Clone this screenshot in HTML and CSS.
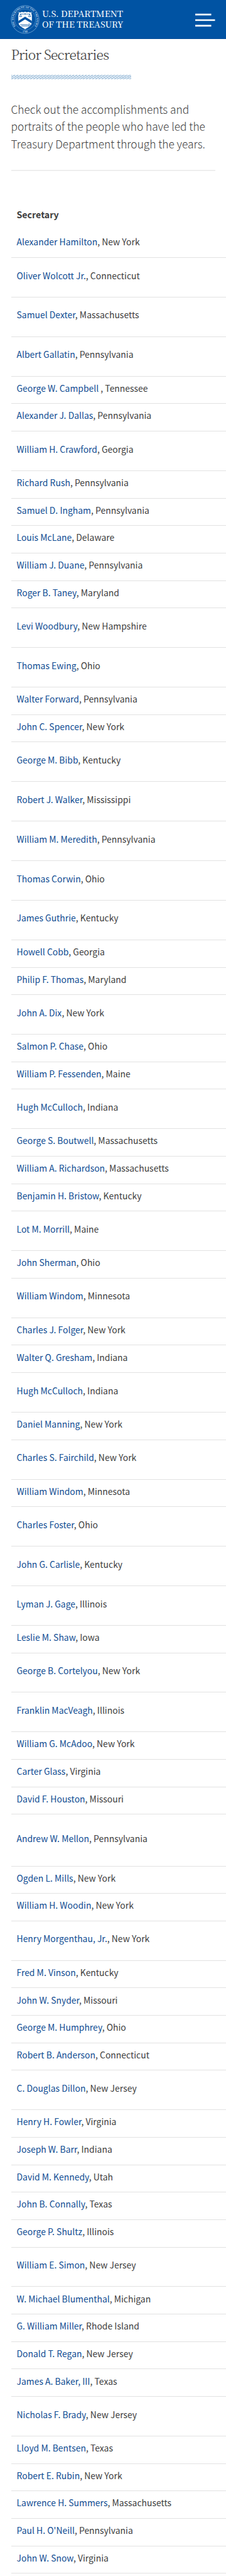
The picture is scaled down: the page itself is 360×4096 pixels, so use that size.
FILE: index.html
```
<!DOCTYPE html>
<html lang="en">
<head>
<meta charset="utf-8">
<title>Prior Secretaries</title>
<link rel="stylesheet" href="styles.css">
</head>
<body>
<header class="site-header">
  <svg class="logo" width="186" height="50" viewBox="0 0 186 50" role="img" aria-label="U.S. Department of the Treasury">
    <defs>
      <path id="ring-top" d="M8.400 34.800A18.200 18.200 0 1 1 37.600 34.800"/>
      <path id="ring-bottom" d="M7 37.300A21 21 0 0 0 39 37.300"/>
    </defs>
    <circle cx="23" cy="24" r="22.100" fill="none" stroke="#8db7df" stroke-width=".7"/>
    <circle cx="23" cy="24" r="16.600" fill="none" stroke="#6fa2d3" stroke-width=".6"/>
    <text class="ring-text"><textPath href="#ring-top" startOffset="50%" text-anchor="middle">THE DEPARTMENT OF THE TREASURY</textPath></text>
    <text class="ring-text"><textPath href="#ring-bottom" startOffset="50%" text-anchor="middle">1789</textPath></text>
    <path d="M12.5 12.2c2 .8 4 .8 5.200-.4 1.800 1 3.600.8 5.300-.3 1.700 1.100 3.500 1.300 5.300.3 1.200 1.200 3.200 1.200 5.200.4-.8 1.800-.4 3.300.3 5V28c0 6-5.300 7.800-10.800 11.500C17.500 35.800 12.200 34 12.200 28V17.200c.7-1.700 1.100-3.200.3-5z" fill="#fff"/>
    <path d="M12.200 26.200L23 19.400l10.800 6.800v4.400L23 23.800l-10.800 6.800z" fill="#0053a3"/>
    <path d="M14.800 15.300h16.400M23 13.500v3M15.800 15.500l-1.800 4h3.600zM30.200 15.500l-1.800 4h3.600z" fill="none" stroke="#0053a3" stroke-width=".7"/>
    <path d="M15.300 32.200h12M17 34.300h12" stroke="#0053a3" stroke-width=".8"/>
    <circle cx="29.500" cy="32.400" r="1.400" fill="none" stroke="#0053a3" stroke-width=".8"/>
    <text class="wordmark" x="50" y="20.400" textLength="129" lengthAdjust="spacingAndGlyphs">U.S. DEPARTMENT</text>
    <text class="wordmark" x="50" y="37" textLength="129.500" lengthAdjust="spacingAndGlyphs">OF THE TREASURY</text>
  </svg>
  <svg class="menu" width="32" height="24" viewBox="0 0 32 24" role="img" aria-label="Menu">
    <path d="M0 3.200H25.500M0 12H31.500M0 20.800H25.500" stroke="#fff" stroke-width="2.700"/>
  </svg>
</header>
<main class="content">
  <h1 class="title">Prior Secretaries</h1>
  <div class="stripes"></div>
  <p class="intro">Check out the accomplishments and<br>portraits of the people who have led the<br>Treasury Department through the years.</p>
  <hr class="rule">
  <div class="list">
    <div class="list-head">Secretary</div>
    <div class="row"><a>Alexander Hamilton</a>, New York</div>
    <div class="row tall"><a>Oliver Wolcott Jr.</a>, Connecticut</div>
    <div class="row tall"><a>Samuel Dexter</a>, Massachusetts</div>
    <div class="row tall"><a>Albert Gallatin</a>, Pennsylvania</div>
    <div class="row"><a>George W. Campbell</a> , Tennessee</div>
    <div class="row"><a>Alexander J. Dallas</a>, Pennsylvania</div>
    <div class="row tall"><a>William H. Crawford</a>, Georgia</div>
    <div class="row"><a>Richard Rush</a>, Pennsylvania</div>
    <div class="row"><a>Samuel D. Ingham</a>, Pennsylvania</div>
    <div class="row"><a>Louis McLane</a>, Delaware</div>
    <div class="row"><a>William J. Duane</a>, Pennsylvania</div>
    <div class="row"><a>Roger B. Taney</a>, Maryland</div>
    <div class="row tall"><a>Levi Woodbury</a>, New Hampshire</div>
    <div class="row tall"><a>Thomas Ewing</a>, Ohio</div>
    <div class="row"><a>Walter Forward</a>, Pennsylvania</div>
    <div class="row"><a>John C. Spencer</a>, New York</div>
    <div class="row tall"><a>George M. Bibb</a>, Kentucky</div>
    <div class="row tall"><a>Robert J. Walker</a>, Mississippi</div>
    <div class="row tall"><a>William M. Meredith</a>, Pennsylvania</div>
    <div class="row tall"><a>Thomas Corwin</a>, Ohio</div>
    <div class="row tall"><a>James Guthrie</a>, Kentucky</div>
    <div class="row"><a>Howell Cobb</a>, Georgia</div>
    <div class="row"><a>Philip F. Thomas</a>, Maryland</div>
    <div class="row tall"><a>John A. Dix</a>, New York</div>
    <div class="row"><a>Salmon P. Chase</a>, Ohio</div>
    <div class="row"><a>William P. Fessenden</a>, Maine</div>
    <div class="row tall"><a>Hugh McCulloch</a>, Indiana</div>
    <div class="row"><a>George S. Boutwell</a>, Massachusetts</div>
    <div class="row"><a>William A. Richardson</a>, Massachusetts</div>
    <div class="row"><a>Benjamin H. Bristow</a>, Kentucky</div>
    <div class="row tall"><a>Lot M. Morrill</a>, Maine</div>
    <div class="row"><a>John Sherman</a>, Ohio</div>
    <div class="row tall"><a>William Windom</a>, Minnesota</div>
    <div class="row"><a>Charles J. Folger</a>, New York</div>
    <div class="row"><a>Walter Q. Gresham</a>, Indiana</div>
    <div class="row tall"><a>Hugh McCulloch</a>, Indiana</div>
    <div class="row"><a>Daniel Manning</a>, New York</div>
    <div class="row tall"><a>Charles S. Fairchild</a>, New York</div>
    <div class="row"><a>William Windom</a>, Minnesota</div>
    <div class="row tall"><a>Charles Foster</a>, Ohio</div>
    <div class="row tall"><a>John G. Carlisle</a>, Kentucky</div>
    <div class="row tall"><a>Lyman J. Gage</a>, Illinois</div>
    <div class="row"><a>Leslie M. Shaw</a>, Iowa</div>
    <div class="row tall"><a>George B. Cortelyou</a>, New York</div>
    <div class="row tall"><a>Franklin MacVeagh</a>, Illinois</div>
    <div class="row"><a>William G. McAdoo</a>, New York</div>
    <div class="row"><a>Carter Glass</a>, Virginia</div>
    <div class="row"><a>David F. Houston</a>, Missouri</div>
    <div class="row taller"><a>Andrew W. Mellon</a>, Pennsylvania</div>
    <div class="row"><a>Ogden L. Mills</a>, New York</div>
    <div class="row"><a>William H. Woodin</a>, New York</div>
    <div class="row tall"><a>Henry Morgenthau, Jr.</a>, New York</div>
    <div class="row"><a>Fred M. Vinson</a>, Kentucky</div>
    <div class="row"><a>John W. Snyder</a>, Missouri</div>
    <div class="row"><a>George M. Humphrey</a>, Ohio</div>
    <div class="row"><a>Robert B. Anderson</a>, Connecticut</div>
    <div class="row tall"><a>C. Douglas Dillon</a>, New Jersey</div>
    <div class="row"><a>Henry H. Fowler</a>, Virginia</div>
    <div class="row"><a>Joseph W. Barr</a>, Indiana</div>
    <div class="row"><a>David M. Kennedy</a>, Utah</div>
    <div class="row"><a>John B. Connally</a>, Texas</div>
    <div class="row"><a>George P. Shultz</a>, Illinois</div>
    <div class="row tall"><a>William E. Simon</a>, New Jersey</div>
    <div class="row"><a>W. Michael Blumenthal</a>, Michigan</div>
    <div class="row"><a>G. William Miller</a>, Rhode Island</div>
    <div class="row"><a>Donald T. Regan</a>, New Jersey</div>
    <div class="row"><a>James A. Baker, III</a>, Texas</div>
    <div class="row tall"><a>Nicholas F. Brady</a>, New Jersey</div>
    <div class="row"><a>Lloyd M. Bentsen</a>, Texas</div>
    <div class="row"><a>Robert E. Rubin</a>, New York</div>
    <div class="row"><a>Lawrence H. Summers</a>, Massachusetts</div>
    <div class="row"><a>Paul H. O'Neill</a>, Pennsylvania</div>
    <div class="row"><a>John W. Snow</a>, Virginia</div>
  </div>
</main>
</body>
</html>
```
FILE: styles.css
```
* { box-sizing: border-box; }
html { height: 4096px; overflow: hidden; }
body {
  margin: 0;
  height: 4096px;
  overflow: hidden;
  background: #fff;
  color: #3d3d3d;
  font-family: "Noto Sans CJK JP", "Noto Sans", sans-serif;
  font-size: 13.900px;
  line-height: 20px;
}
.site-header {
  display: flex;
  justify-content: space-between;
  align-items: flex-start;
  height: 62px;
  padding: 6.800px 17.500px 0 16.800px;
  background: #0053a3;
  border-bottom: 1px solid #004a97;
}
.logo { display: block; }
.wordmark {
  fill: #fff;
  font-family: "Noto Serif CJK JP", "Noto Serif", "Liberation Serif", serif;
  font-size: 13.400px;
  font-weight: 500;
}
.ring-text {
  fill: #c3daf0;
  font-family: "Liberation Serif", serif;
  font-size: 4.200px;
  font-weight: 700;
}
.menu { display: block; margin-top: 13px; }
.content { padding-left: 17.500px; }
.title {
  margin: 0;
  height: 57px;
  padding-top: 8.500px;
  font-family: "Noto Serif CJK JP", "Noto Serif", "Liberation Serif", serif;
  font-size: 21px;
  font-weight: 300;
  line-height: 30px;
  letter-spacing: -.75px;
}
.stripes {
  width: 191px;
  height: 7px;
  background: repeating-linear-gradient(147deg, #a3c1da 0 1.100px, #e0ebf5 1.100px 2.700px);
}
.intro {
  margin: 34px 0 0;
  height: 110px;
  font-size: 17.300px;
  font-weight: 300;
  line-height: 27.400px;
  white-space: nowrap;
}
.rule {
  height: 1.750px;
  margin: 0 17.500px 0 0;
  border: 0;
  background: #eee;
}
.list-head {
  height: 94.600px;
  padding: 59.500px 0 0 9px;
  font-size: 14.200px;
  font-weight: 700;
}
.row {
  height: 43.670px;
  padding: 8.100px 0 0 9px;
  border-bottom: 1px solid #e2e2e2;
  letter-spacing: .02px;
  white-space: nowrap;
}
.tall { height: 62.920px; padding-top: 17.500px; }
.taller { height: 82.200px; padding-top: 27.200px; }
.row a { color: #0f4c92; }
```
